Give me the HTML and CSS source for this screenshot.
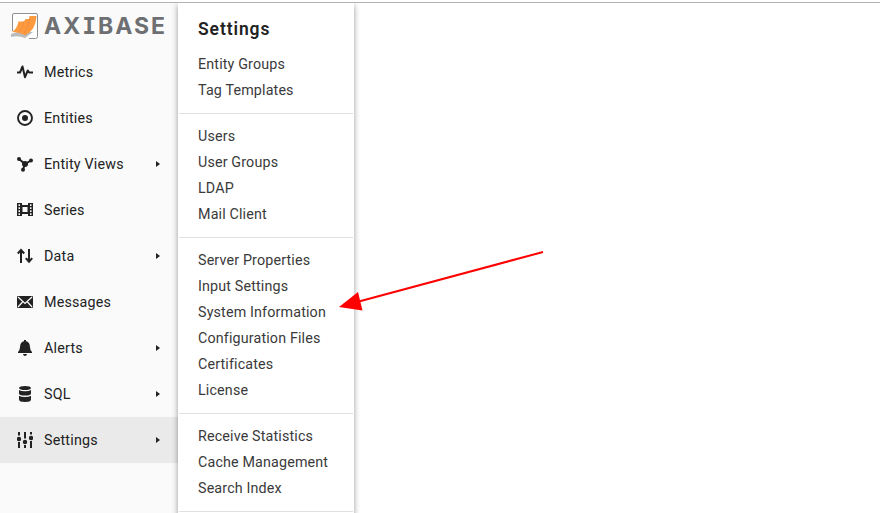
FILE: index.html
```html
<!DOCTYPE html>
<html lang="en">
<head>
<meta charset="utf-8">
<title>Axibase</title>
<link rel="stylesheet" href="styles.css">
</head>
<body>
<div class="app">
  <aside class="sidebar">
    <div class="brand">
      <svg class="brand-mark" width="28" height="28" viewBox="0 0 28 28">
        <path d="M1.500 19V3Q1.500 1.500 3 1.500H25Q26.500 1.500 26.500 3V24.500Q26.500 26.500 24.500 26.500H18" fill="#fff" stroke="#8d8f92" stroke-width="1"/>
        <path d="M0 22L9 19L22 20L14 26Q7 23 0 25Z" fill="#b9bbbd"/>
        <path d="M1 20Q6 17 7.500 9.500H13L14.500 7H18L18.500 4H25.500Q25 18 14 23.500Q9 20 1 20Z" fill="#fd9a3f"/>
        <path d="M8 20Q12 16 13 9M13 21Q17 17 18.500 6" fill="none" stroke="#f08a38" stroke-width=".7"/>
      </svg>
      <span class="brand-name">AX<span class="serif-i">I</span>BASE</span>
    </div>
    <nav class="nav">
      <a class="nav-item"><svg class="icon" viewBox="0 0 16 16"><path d="M0 8.500H3L5.500 2.500L8 13.200L10.800 6.500L12.200 8.500H16" fill="none" stroke="#222" stroke-width="2" stroke-linejoin="round"/></svg><span class="label">Metrics</span></a>
      <a class="nav-item"><svg class="icon" viewBox="0 0 16 16"><circle cx="8" cy="8" r="7" fill="none" stroke="#222" stroke-width="1.900"/><circle cx="8" cy="8" r="3" fill="#222"/></svg><span class="label">Entities</span></a>
      <a class="nav-item"><svg class="icon" viewBox="0 0 16 16"><path d="M2 3L8 8L14 4.500M8 8L6 13.500" stroke="#222" stroke-width="2" fill="none"/><g fill="#222"><circle cx="2" cy="3" r="2"/><circle cx="14" cy="4.500" r="2"/><circle cx="8" cy="8" r="3"/><circle cx="6" cy="13.700" r="2"/></g></svg><span class="label">Entity Views</span><i class="caret"></i></a>
      <a class="nav-item"><svg class="icon" viewBox="0 0 16 16"><path fill="#222" fill-rule="evenodd" d="M0 1H16V14H0ZM1.500 2.300V4H3V2.300ZM1.500 5.300V7H3V5.300ZM1.500 8.300V10H3V8.300ZM1.500 11.300V13H3V11.300ZM13 2.300V4H14.500V2.300ZM13 5.300V7H14.500V5.300ZM13 8.300V10H14.500V8.300ZM13 11.300V13H14.500V11.300ZM5 1V3H11V1ZM5.500 5V10H10.500V5ZM5 12V14H11V12Z"/></svg><span class="label">Series</span></a>
      <a class="nav-item"><svg class="icon" viewBox="0 0 16 16"><path d="M4 15V2.500M.8 5.500L4 2L7.200 5.500M12 1V13M8.800 10.200L12 13.700L15.200 10.200" fill="none" stroke="#222" stroke-width="2"/></svg><span class="label">Data</span><i class="caret"></i></a>
      <a class="nav-item"><svg class="icon" viewBox="0 0 16 16"><rect y="2" width="16" height="12" rx="1" fill="#222"/><path d="M1 3L8 9.500L15 3M1 13L5.500 8M15 13L10.500 8" fill="none" stroke="#fafafa" stroke-width="1.200"/></svg><span class="label">Messages</span></a>
      <a class="nav-item"><svg class="icon" viewBox="0 0 16 16"><path d="M7 0H9V1.300Q12.800 2 12.900 6.500Q13 10 15 12V13H1V12Q3 10 3.100 6.500Q3.200 2 7 1.300ZM6 14H10Q9.700 16 8 16Q6.300 16 6 14Z" fill="#222"/></svg><span class="label">Alerts</span><i class="caret"></i></a>
      <a class="nav-item"><svg class="icon" viewBox="0 0 16 16"><g fill="#222"><ellipse cx="8" cy="2" rx="6" ry="2"/><path d="M2 4Q4 5.300 8 5.300T14 4V7.500Q14 9.500 8 9.500T2 7.500Z"/><path d="M2 9.800Q4 11 8 11T14 9.800V13.500Q14 16 8 16T2 13.500Z"/></g></svg><span class="label">SQL</span><i class="caret"></i></a>
      <a class="nav-item active"><svg class="icon" viewBox="0 0 16 16"><path d="M2 0V3.500M2 10V16M8 0V6.500M8 13V16M14 0V2.500M14 9V16" stroke="#222" stroke-width="2"/><g fill="#222"><circle cx="2" cy="7" r="2.200"/><circle cx="8" cy="10" r="2.200"/><circle cx="14" cy="6" r="2.200"/></g></svg><span class="label">Settings</span><i class="caret"></i></a>
    </nav>
  </aside>
  <section class="submenu">
    <h2 class="title">Settings</h2>
    <ul class="group"><li>Entity Groups</li><li>Tag Templates</li></ul>
    <ul class="group"><li>Users</li><li>User Groups</li><li>LDAP</li><li>Mail Client</li></ul>
    <ul class="group"><li>Server Properties</li><li>Input Settings</li><li>System Information</li><li>Configuration Files</li><li>Certificates</li><li>License</li></ul>
    <ul class="group"><li>Receive Statistics</li><li>Cache Management</li><li>Search Index</li></ul>
  </section>
</div>
<svg class="pointer" width="206" height="64" viewBox="0 0 206 64"><path d="M204 2L18 52" stroke="#f00" stroke-width="2"/><path d="M0 57L19 42L23.500 60.500Z" fill="#f00"/></svg>
</body>
</html>
```
FILE: styles.css
```css
* { box-sizing: border-box; }
body {
  margin: 0;
  height: 513px;
  padding-top: 2px;
  overflow: hidden;
  background: #fff;
  color: #222;
  font: 14.3px/26px Roboto, "Liberation Sans", sans-serif;
}
.app {
  display: flex;
  height: 511px;
  border-top: 1px solid #b4b3b4;
  overflow: hidden;
}
.sidebar { width: 178px; background: #fafafa; }
.brand {
  display: flex;
  align-items: center;
  height: 46px;
  padding: 0 0 0 11px;
}
.brand-mark { flex: none; }
.brand-name {
  margin-left: 5px;
  color: #6d6f72;
  font: 700 23px/28px Inter, sans-serif;
  letter-spacing: 2px;
}
.serif-i { font-family: "DejaVu Sans Mono", monospace; font-weight: 700; }
.nav-item {
  display: flex;
  align-items: center;
  height: 46px;
  padding: 0 18px 0 17px;
}
.nav-item.active { background: #eaeaea; }
.icon { flex: none; width: 16px; height: 16px; margin-right: 11px; }
.label { flex: 1; white-space: nowrap; letter-spacing: .2px; }
.caret {
  border: solid transparent;
  border-width: 3px 0 3px 4px;
  border-left-color: #222;
}
.submenu {
  position: relative;
  width: 176px;
  height: 530px;
  padding: 0 1px;
  background: #fff;
  box-shadow: 0 2px 6px rgba(0, 0, 0, .4);
}
.title {
  margin: 0;
  height: 48px;
  padding: 13px 19px 0;
  font-size: 17.5px;
  line-height: 26px;
  font-weight: 600;
  letter-spacing: .9px;
}
.group {
  margin: 0 0 9px;
  padding: 0 19px 10px;
  border-bottom: 1px solid #e0e0e0;
  list-style: none;
  color: #3a3a3a;
  letter-spacing: .15px;
  white-space: nowrap;
}
.pointer { position: absolute; left: 339px; top: 250px; }
```
